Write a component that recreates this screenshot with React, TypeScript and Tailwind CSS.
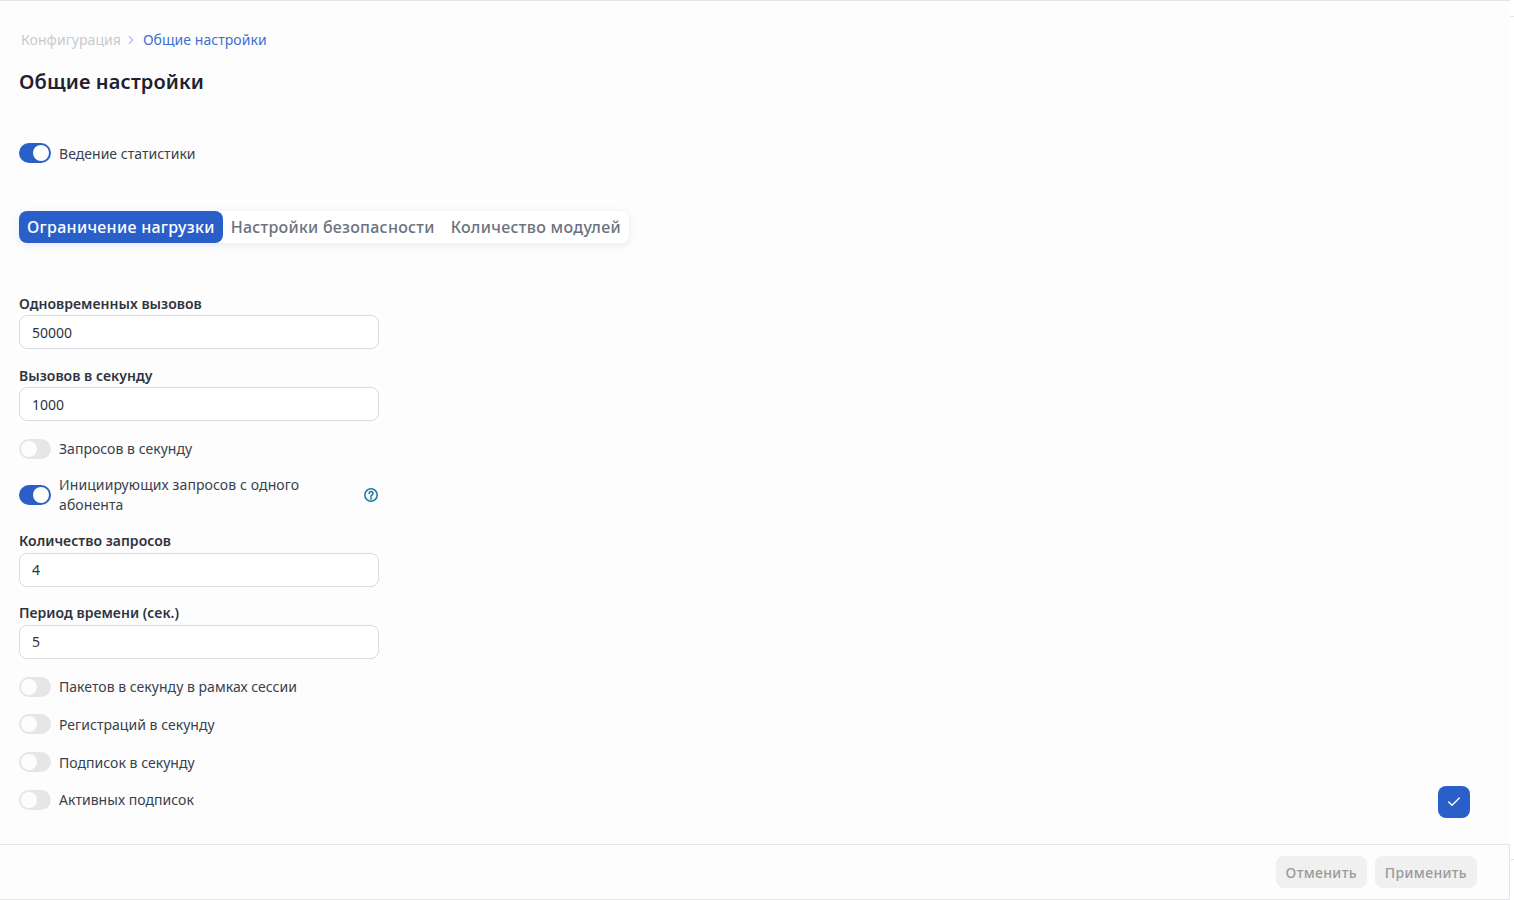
import { Check, ChevronRight } from "lucide-react";

function Toggle({ on }: { on?: boolean }) {
  return (
    <span
      className={
        on
          ? "flex h-5 w-8 shrink-0 items-center justify-end rounded-full bg-[#2a5fca] pr-0.5"
          : "flex h-5 w-8 shrink-0 items-center justify-start rounded-full bg-[#e6e6e6] pl-0.5"
      }
    >
      <span className={on ? "h-4 w-4 rounded-full bg-white" : "h-4 w-4 rounded-full bg-[#fdfdfd]"} />
    </span>
  );
}

function ToggleRow({ label, on, low, className }: { label: string; on?: boolean; low?: boolean; className?: string }) {
  return (
    <div className={"flex h-5 items-center gap-2 " + (className ?? "")}>
      <Toggle on={on} />
      <span className={low ? "translate-y-px text-sm leading-5 tracking-[0.03px] text-[#3a3f4b]" : "text-sm leading-5 tracking-[0.03px] text-[#3a3f4b]"}>
        {label}
      </span>
    </div>
  );
}

function Field({ label, value, low, className }: { label: string; value: string; low?: boolean; className?: string }) {
  return (
    <div className={"flex flex-col " + (className ?? "")}>
      <label className="h-[20px] text-sm font-semibold leading-5 tracking-[0.03px] text-[#2f3440]">{label}</label>
      <div
        className={
          low
            ? "mt-[2px] flex h-[34px] items-center rounded-lg border border-[#d9dbe3] bg-white px-3 text-sm text-[#2f3440]"
            : "mt-[1px] flex h-[34px] items-center rounded-lg border border-[#d9dbe3] bg-white px-3 pt-px text-sm text-[#2f3440]"
        }
      >
        {value}
      </div>
    </div>
  );
}

export default function App() {
  return (
    <div className="relative flex h-[900px] w-[1514px] flex-col overflow-hidden bg-white font-['Noto_Sans',sans-serif]">
      <div className="flex w-[1510px] flex-1 flex-col border-t border-[#e3e5ea] bg-[#fdfdfd]">
        <div className="flex flex-1 flex-col pl-[19px]">
          <nav className="mt-[29px] flex h-5 items-center pl-0.5 text-sm leading-5 tracking-[0.05px]">
            <span className="text-[#c8cad0]">Конфигурация</span>
            <ChevronRight className="ml-[3px] mr-[5px] h-3.5 w-3.5 text-[#a9bfee]" strokeWidth={2} />
            <span className="text-[#3f6fd0]">Общие настройки</span>
          </nav>
          <h1 className="mt-[17px] text-xl font-semibold leading-[30px] tracking-[0.13px] text-[#1e2230]">Общие настройки</h1>

          <ToggleRow label="Ведение статистики" on low className="mt-[46px]" />

          <div className="mt-[48px] flex h-8 w-fit items-center whitespace-nowrap rounded-lg bg-white text-base font-medium tracking-[0.3px] text-[#6b7280] shadow-[0_2px_8px_rgba(80,100,180,0.13)]">
            <span className="flex h-8 items-center rounded-lg bg-[#2a5fca] px-2 text-white">Ограничение нагрузки</span>
            <span className="flex h-8 items-center px-2 tracking-[0.25px]">Настройки безопасности</span>
            <span className="flex h-8 items-center px-2">Количество модулей</span>
          </div>

          <div className="mt-[51px] flex w-[360px] flex-col">
            <Field label="Одновременных вызовов" value="50000" />
            <Field label="Вызовов в секунду" value="1000" className="mt-[17px]" />
            <ToggleRow label="Запросов в секунду" className="mt-[18px]" />
            <div className="mt-[16px] flex items-center gap-2">
              <Toggle on />
              <span className="flex-1 pr-8 text-sm leading-5 tracking-[0.1px] text-[#3a3f4b]">Инициирующих запросов с одного абонента</span>
              <svg viewBox="0 0 16 16" className="h-4 w-4 text-[#1d7fa8]" fill="none" stroke="currentColor" strokeWidth="1.6" strokeLinecap="round">
                <circle cx="8" cy="8" r="6.2" />
                <path d="M6.2 6.4a1.9 1.9 0 1 1 2.9 1.6c-.7.4-1.1.8-1.1 1.6" />
                <circle cx="8" cy="11.5" r=".4" />
              </svg>
            </div>
            <Field label="Количество запросов" value="4" low className="mt-[16px]" />
            <Field label="Период времени (сек.)" value="5" low className="mt-[16px]" />
            <ToggleRow label="Пакетов в секунду в рамках сессии" className="mt-[18px]" />
            <ToggleRow label="Регистраций в секунду" low className="mt-[17px]" />
            <ToggleRow label="Подписок в секунду" low className="mt-[18px]" />
            <ToggleRow label="Активных подписок" className="mt-[18px]" />
          </div>
        </div>

        <footer className="flex h-[56px] items-center justify-end gap-2 border-y border-r border-[#e3e5ea] pr-[32px]">
          <span className="flex h-8 items-center rounded-lg bg-[#f0f0f0] px-2.5 pt-px text-sm font-medium tracking-[0.35px] text-[#9a9a9a]">Отменить</span>
          <span className="flex h-8 items-center rounded-lg bg-[#f0f0f0] px-2.5 pt-px text-sm font-medium tracking-[0.35px] text-[#9a9a9a]">Применить</span>
        </footer>
      </div>

      <button className="absolute left-[1438px] top-[786px] flex h-8 w-8 items-center justify-center rounded-lg bg-[#2a5fca] text-white">
        <Check className="h-4 w-4" strokeWidth={2} />
      </button>
      <span className="absolute left-[1510px] top-[16px] h-px w-1 bg-[#e3e5ea]" />
      <span className="absolute left-[1510px] top-[859px] h-px w-1 bg-[#e3e5ea]" />
    </div>
  );
}
